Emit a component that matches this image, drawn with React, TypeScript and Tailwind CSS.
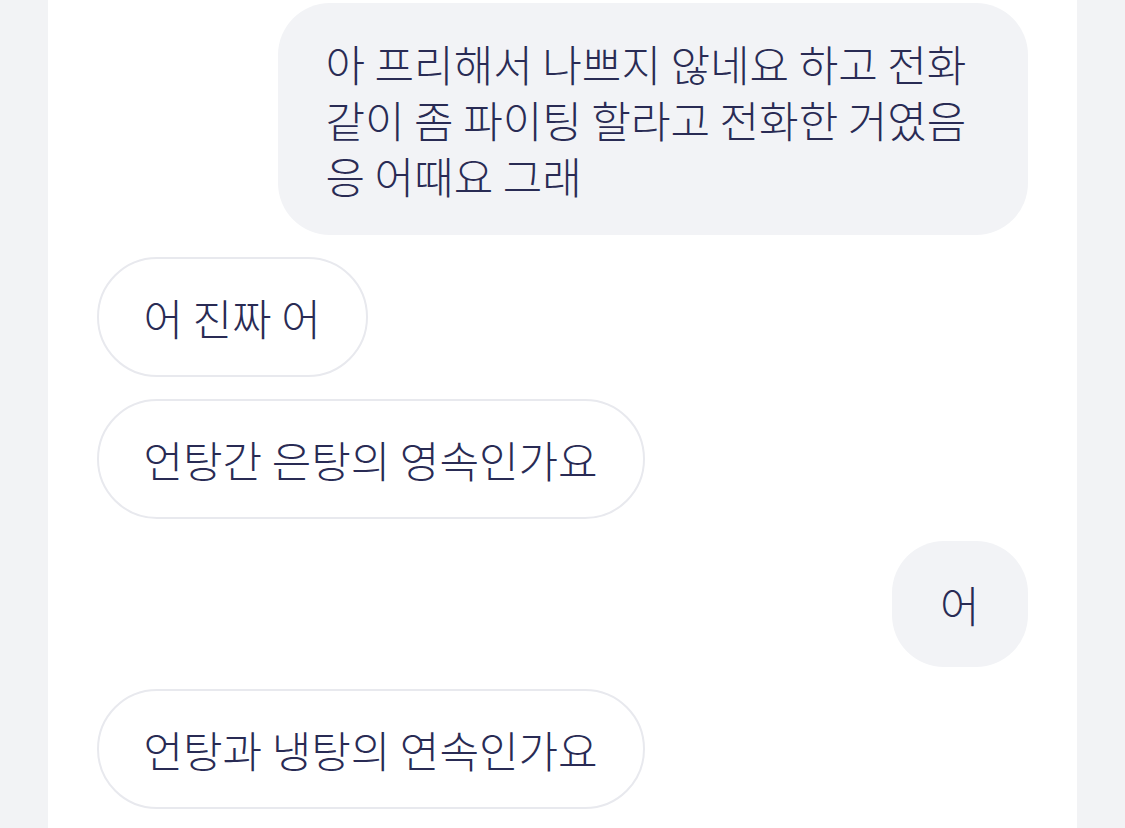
import React from 'react'

type Msg = { side: 'left' | 'right'; lines: string[]; className?: string }

const messages: Msg[] = [
  {
    side: 'right',
    lines: ['아 프리해서 나쁘지 않네요 하고 전화', '같이 좀 파이팅 할라고 전화한 거였음', '응 어때요 그래'],
    className: 'w-[750px]',
  },
  { side: 'left', lines: ['어 진짜 어'] },
  { side: 'left', lines: ['언탕간 은탕의 영속인가요'] },
  { side: 'right', lines: ['어'], className: 'py-[35px]' },
  { side: 'left', lines: ['언탕과 냉탕의 연속인가요'] },
]

function Bubble({ msg }: { msg: Msg }) {
  const isRight = msg.side === 'right'
  return (
    <div className={isRight ? 'flex justify-end' : 'flex justify-start'}>
      <div
        className={
          (isRight
            ? 'bg-[#f2f3f6] rounded-[52px] px-[48px] py-[32px] '
            : 'bg-white border-2 border-[#e8e9ee] rounded-[60px] px-[45px] py-[30px] ') +
          (msg.className ?? '')
        }
      >
        {msg.lines.map((line, i) => (
          <div key={i} className="whitespace-nowrap">
            {line}
          </div>
        ))}
      </div>
    </div>
  )
}

export default function App() {
  return (
    <div
      className="min-h-[828px] bg-[#f2f3f5] flex justify-center"
      style={{ fontFamily: '"Noto Sans CJK KR", "Noto Sans", sans-serif' }}
    >
      <div className="w-[1029px] bg-white px-[49px] pt-[3px] pb-6 flex flex-col gap-[22px] text-[43px] leading-[56px] font-light text-[#292b54] ml-[-1px]">
        {messages.map((m, i) => (
          <Bubble key={i} msg={m} />
        ))}
      </div>
    </div>
  )
}
